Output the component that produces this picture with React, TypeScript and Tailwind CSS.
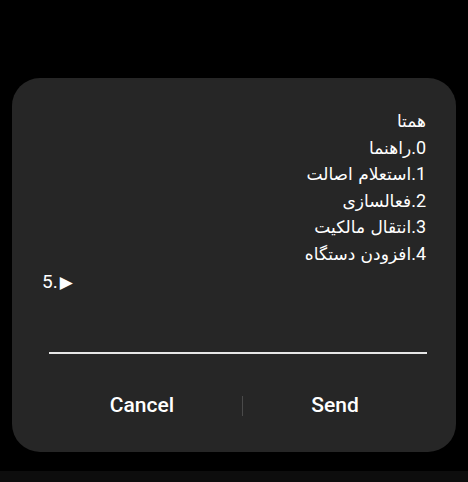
import React from "react";

const lines = [
  { n: "", t: "همتا" },
  { n: "0", t: "راهنما" },
  { n: "1", t: "استعلام اصالت" },
  { n: "2", t: "فعالسازی" },
  { n: "3", t: "انتقال مالکیت" },
  { n: "4", t: "افزودن دستگاه" },
];

export default function App() {
  return (
    <div
      className="w-[468px] h-[482px] bg-black flex flex-col overflow-hidden text-white"
      style={{ fontFamily: 'Roboto, "DejaVu Sans", sans-serif' }}
    >
      <div className="mt-[78px] mx-[12px] h-[374px] rounded-[28px] bg-[#262626] flex flex-col">
        <div className="pt-[30px] px-[30px] leading-[26.5px]">
          {lines.map((l, i) => (
            <div key={i} dir="ltr" className="flex justify-end items-baseline h-[26.5px]">
              <span dir="rtl" className="text-[17px]" style={{ fontFamily: '"DejaVu Sans", sans-serif' }}>
                {l.t}
              </span>
              {l.n && <span className="text-[18px]">.</span>}
              {l.n && <span className="text-[18px]">{l.n}</span>}
            </div>
          ))}
          <div dir="ltr" className="flex justify-start items-baseline h-[26.5px] pt-[2px]">
            <span className="text-[19px]">5.</span>
            <span className="text-[17px] ml-[2px]" style={{ fontFamily: '"DejaVu Sans", sans-serif' }}>▶</span>
          </div>
        </div>
        <div className="mt-[58px] ml-[37px] mr-[29px] h-[2px] bg-[#e6e6e6]" />
        <div className="mt-[24px] h-[56px] pl-[30px] flex items-center">
          <div className="w-[200px] text-center text-[21px] font-medium">Cancel</div>
          <div className="w-[1px] h-[20px] bg-[#4a4a4a]" />
          <div className="w-[184px] text-center text-[21px] font-medium">Send</div>
        </div>
      </div>
      <div className="mt-[19px] h-[11px] bg-[#0d0d0d]" />
    </div>
  );
}
